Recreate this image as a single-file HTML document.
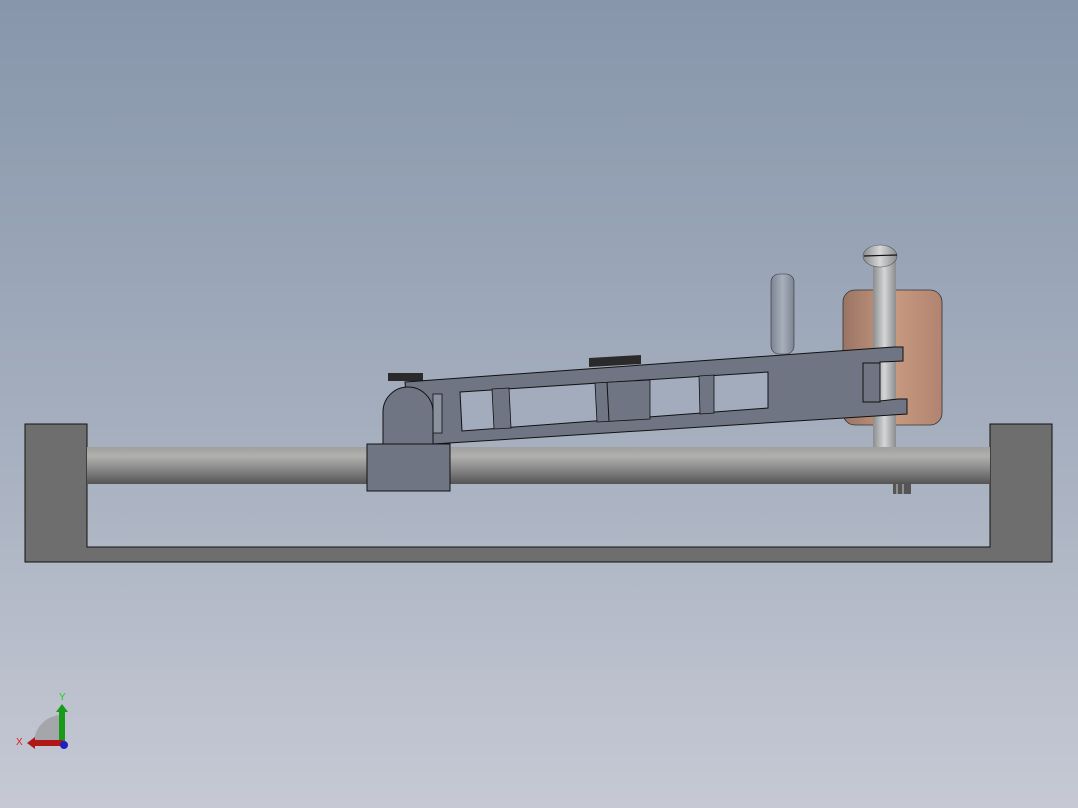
<!DOCTYPE html>
<html><head><style>html,body{margin:0;padding:0;width:1078px;height:808px;overflow:hidden}
body{background:linear-gradient(#8796ab,#a3adbd 50%,#c6c9d4)}svg{position:absolute;left:0;top:0}</style></head>
<body><svg width="1078" height="808" viewBox="0 0 1078 808" xmlns="http://www.w3.org/2000/svg">
<defs>
<linearGradient id="tube" x1="0" y1="0" x2="0" y2="1"><stop offset="0" stop-color="#a0a09e"/><stop offset="0.25" stop-color="#b0b0ae"/><stop offset="0.6" stop-color="#888888"/><stop offset="1" stop-color="#545454"/></linearGradient>
<linearGradient id="cop" x1="0" y1="0" x2="1" y2="0"><stop offset="0" stop-color="#9a7464"/><stop offset="0.5" stop-color="#c89a80"/><stop offset="1" stop-color="#b08470"/></linearGradient>
<linearGradient id="rod" x1="0" y1="0" x2="1" y2="0"><stop offset="0" stop-color="#8a8c8e"/><stop offset="0.5" stop-color="#d4d6d8"/><stop offset="1" stop-color="#8a8c8e"/></linearGradient>
<linearGradient id="post" x1="0" y1="0" x2="1" y2="0"><stop offset="0" stop-color="#7c8492"/><stop offset="0.5" stop-color="#a8b0bc"/><stop offset="1" stop-color="#7c8492"/></linearGradient>
</defs>
<path d="M25 424H87V547H990V424H1052V562H25Z" fill="#6e6e6e" stroke="#111" stroke-width="1"/>
<rect x="843" y="290" width="99" height="135" rx="12" fill="url(#cop)" stroke="#333" stroke-width="0.8"/>
<rect x="771" y="274" width="23" height="80" rx="8" fill="url(#post)" stroke="#333" stroke-width="0.6"/>
<rect x="87" y="447" width="903" height="37" fill="url(#tube)"/>
<rect x="873" y="255" width="23" height="192" fill="url(#rod)"/>
<rect x="893" y="482" width="18" height="12" fill="#555"/>
<line x1="897" y1="484" x2="897" y2="494" stroke="#ccc"/><line x1="903" y1="484" x2="903" y2="494" stroke="#ccc"/>
<ellipse cx="880" cy="256" rx="17" ry="11" fill="url(#rod)" stroke="#555" stroke-width="0.6"/>
<line x1="864" y1="256" x2="897" y2="255" stroke="#111" stroke-width="1.2"/>
<rect x="388" y="373" width="35" height="8" fill="#2a2a2a"/>
<polygon points="589,358 641,355 641,364 589,367" fill="#2a2a2a"/>
<polygon points="405,382 894,347 903,347 903,361 880,362 880,401 898,399 907,399 907,414 433,444 410,444" fill="#6f7582" stroke="#111" stroke-width="1"/>
<rect x="863" y="363" width="17" height="39" fill="#6f7582" stroke="#111" stroke-width="1"/>
<polygon points="460,392 768,372 768,408 462,431" fill="#a2acbc" stroke="#111" stroke-width="1"/>
<polygon points="492,389 509,388 511,428 494,429" fill="#6f7582" stroke="#111" stroke-width="0.8"/>
<polygon points="595,383 650,380 650,419 597,422" fill="#6f7582" stroke="#111" stroke-width="0.8"/>
<line x1="607" y1="382" x2="609" y2="421" stroke="#111"/>
<polygon points="699,376 714,375 714,413 700,414" fill="#6f7582" stroke="#111" stroke-width="0.8"/>
<rect x="433" y="394" width="9" height="39" fill="#8a92a0" stroke="#111" stroke-width="0.8"/>
<path d="M383 444V412A25 25 0 0 1 433 412V444Z" fill="#6f7582" stroke="#111" stroke-width="1"/>
<rect x="367" y="444" width="83" height="47" fill="#6f7582" stroke="#111" stroke-width="1"/>
<path d="M34 743A28 28 0 0 1 62 715V743Z" fill="#a4a6ab"/>
<rect x="59" y="712" width="6" height="31" fill="#1a9a1a"/>
<polygon points="56,712 68,712 62,704" fill="#1a9a1a"/>
<rect x="35" y="740" width="28" height="6" fill="#b01818"/>
<polygon points="35,737 35,749 27,743" fill="#b01818"/>
<circle cx="64" cy="745" r="4" fill="#2020c0"/>
<text x="59" y="700" font-family="Liberation Sans,sans-serif" font-size="10" fill="#20d020">Y</text>
<text x="16" y="745" font-family="Liberation Sans,sans-serif" font-size="10" fill="#e02020">X</text>
</svg></body></html>
